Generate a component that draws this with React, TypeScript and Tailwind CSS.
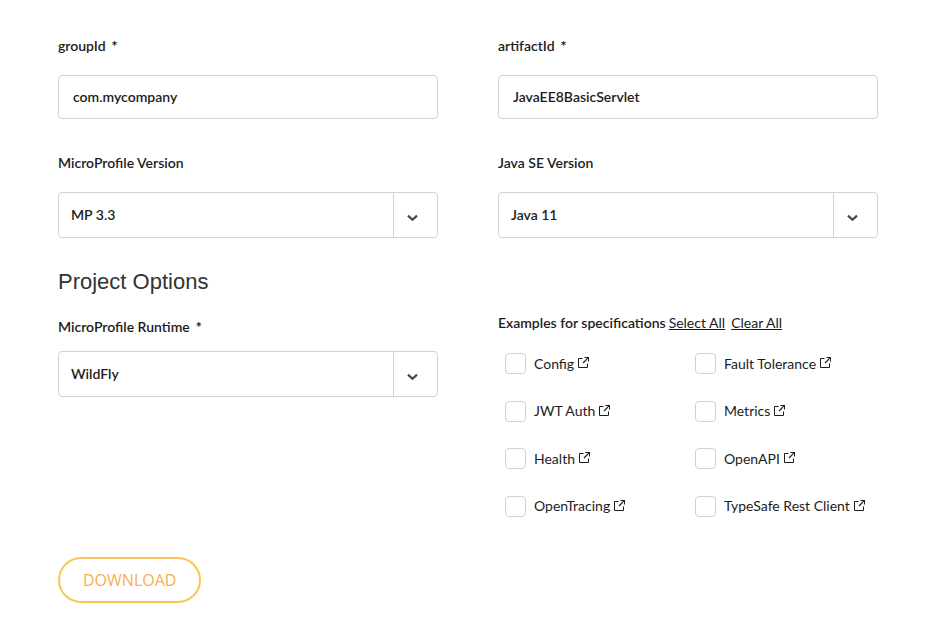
import { useState, type ReactNode } from "react";

const SPECS = [
  "Config",
  "Fault Tolerance",
  "JWT Auth",
  "Metrics",
  "Health",
  "OpenAPI",
  "OpenTracing",
  "TypeSafe Rest Client",
];

function FieldLabel({ htmlFor, required, children }: { htmlFor: string; required?: boolean; children: ReactNode }) {
  return (
    <label htmlFor={htmlFor} className="block text-sm leading-5 font-semibold">
      {children}
      {required && <span className="ml-1.5 font-black">*</span>}
    </label>
  );
}

function TextField({ id, label, value }: { id: string; label: string; value: string }) {
  return (
    <div className="flex flex-col gap-[19px]">
      <FieldLabel htmlFor={id} required>
        {label}
      </FieldLabel>
      <input
        id={id}
        type="text"
        defaultValue={value}
        className="h-11 w-full rounded border border-[#d3d3d3] bg-white px-3.5 pb-0.5 text-sm font-semibold outline-none"
      />
    </div>
  );
}

function SelectBox({ id, options }: { id: string; options: string[] }) {
  return (
    <div className="grid h-[46px] grid-cols-[1fr_44px] rounded border border-[#d3d3d3]">
      <select
        id={id}
        className="col-span-2 col-start-1 row-start-1 w-full appearance-none rounded bg-transparent px-3 text-sm font-semibold outline-none"
      >
        {options.map((o) => (
          <option key={o}>{o}</option>
        ))}
      </select>
      <span className="pointer-events-none col-start-2 row-start-1 flex items-center border-l border-[#d3d3d3] pt-1.5 pl-3">
        <svg width="12" height="8" viewBox="0 0 12 8" fill="none" stroke="#4a4a4a" strokeWidth="2.2" aria-hidden="true">
          <path d="M2 1.6 6.5 5.8 11 1.6" />
        </svg>
      </span>
    </div>
  );
}

function ExternalIcon() {
  return (
    <svg width="11" height="11" viewBox="0 0 11 11" fill="none" stroke="currentColor" strokeWidth="1" aria-hidden="true">
      <path d="M4.5 1.5H.5v9h9V6.5" />
      <path d="M6.5.5h4v4M10.5.5 5 6" strokeWidth="1.1" />
    </svg>
  );
}

export default function App() {
  const [picked, setPicked] = useState<string[]>([]);
  const toggle = (name: string) =>
    setPicked((p) => (p.includes(name) ? p.filter((n) => n !== name) : [...p, name]));

  return (
    <form
      onSubmit={(e) => e.preventDefault()}
      className="bg-white pt-9 pr-[49px] pb-[15px] pl-[58px] font-[Lato,sans-serif] text-[#1c1c1c]"
    >
      <div className="grid grid-cols-2 gap-x-[60px] gap-y-[34px]">
        <TextField id="groupId" label="groupId" value="com.mycompany" />
        <TextField id="artifactId" label="artifactId" value="JavaEE8BasicServlet" />
        <div className="flex flex-col gap-[19px]">
          <FieldLabel htmlFor="mpVersion">MicroProfile Version</FieldLabel>
          <SelectBox id="mpVersion" options={["MP 3.3", "MP 3.2"]} />
        </div>
        <div className="flex flex-col gap-[19px]">
          <FieldLabel htmlFor="javaVersion">Java SE Version</FieldLabel>
          <SelectBox id="javaVersion" options={["Java 11", "Java 8"]} />
        </div>
      </div>

      <h2 className="mt-7 font-['Liberation_Sans',Arial,sans-serif] text-[22px] leading-8 text-[#333]">
        Project Options
      </h2>

      <div className="mt-[15px] grid grid-cols-2 gap-x-[60px]">
        <div className="flex flex-col gap-3.5 pt-1">
          <FieldLabel htmlFor="runtime" required>
            MicroProfile Runtime
          </FieldLabel>
          <SelectBox id="runtime" options={["WildFly", "Payara Micro", "Open Liberty"]} />
        </div>

        <fieldset className="min-w-0">
          <div className="flex text-sm leading-5 whitespace-nowrap">
            <span className="font-semibold">Examples for specifications</span>
            <a href="#all" onClick={() => setPicked(SPECS)} className="ml-[3px] underline">
              Select All
            </a>
            <a href="#none" onClick={() => setPicked([])} className="ml-1.5 underline">
              Clear All
            </a>
          </div>
          <div className="mt-5 grid h-[164px] grid-cols-2 content-between">
            {SPECS.map((name) => (
              <div key={name} className="flex h-[21px] items-center pl-[7px] text-sm whitespace-nowrap">
                <input
                  id={name}
                  type="checkbox"
                  checked={picked.includes(name)}
                  onChange={() => toggle(name)}
                  className="size-[21px] shrink-0 appearance-none rounded border border-[#d0d0d0] bg-white checked:bg-[#fdb940]"
                />
                <label htmlFor={name} className="ml-2">
                  {name}
                </label>
                <a href="#spec" aria-label={name + " specification"} className="ml-1 pb-0.5">
                  <ExternalIcon />
                </a>
              </div>
            ))}
          </div>
        </fieldset>
      </div>

      <button
        type="submit"
        className="mt-10 h-[46px] rounded-full border-2 border-[#f8c657] px-[23px] font-['Open_Sans',sans-serif] text-base font-normal text-[#f9b04a]"
      >
        DOWNLOAD
      </button>
    </form>
  );
}
